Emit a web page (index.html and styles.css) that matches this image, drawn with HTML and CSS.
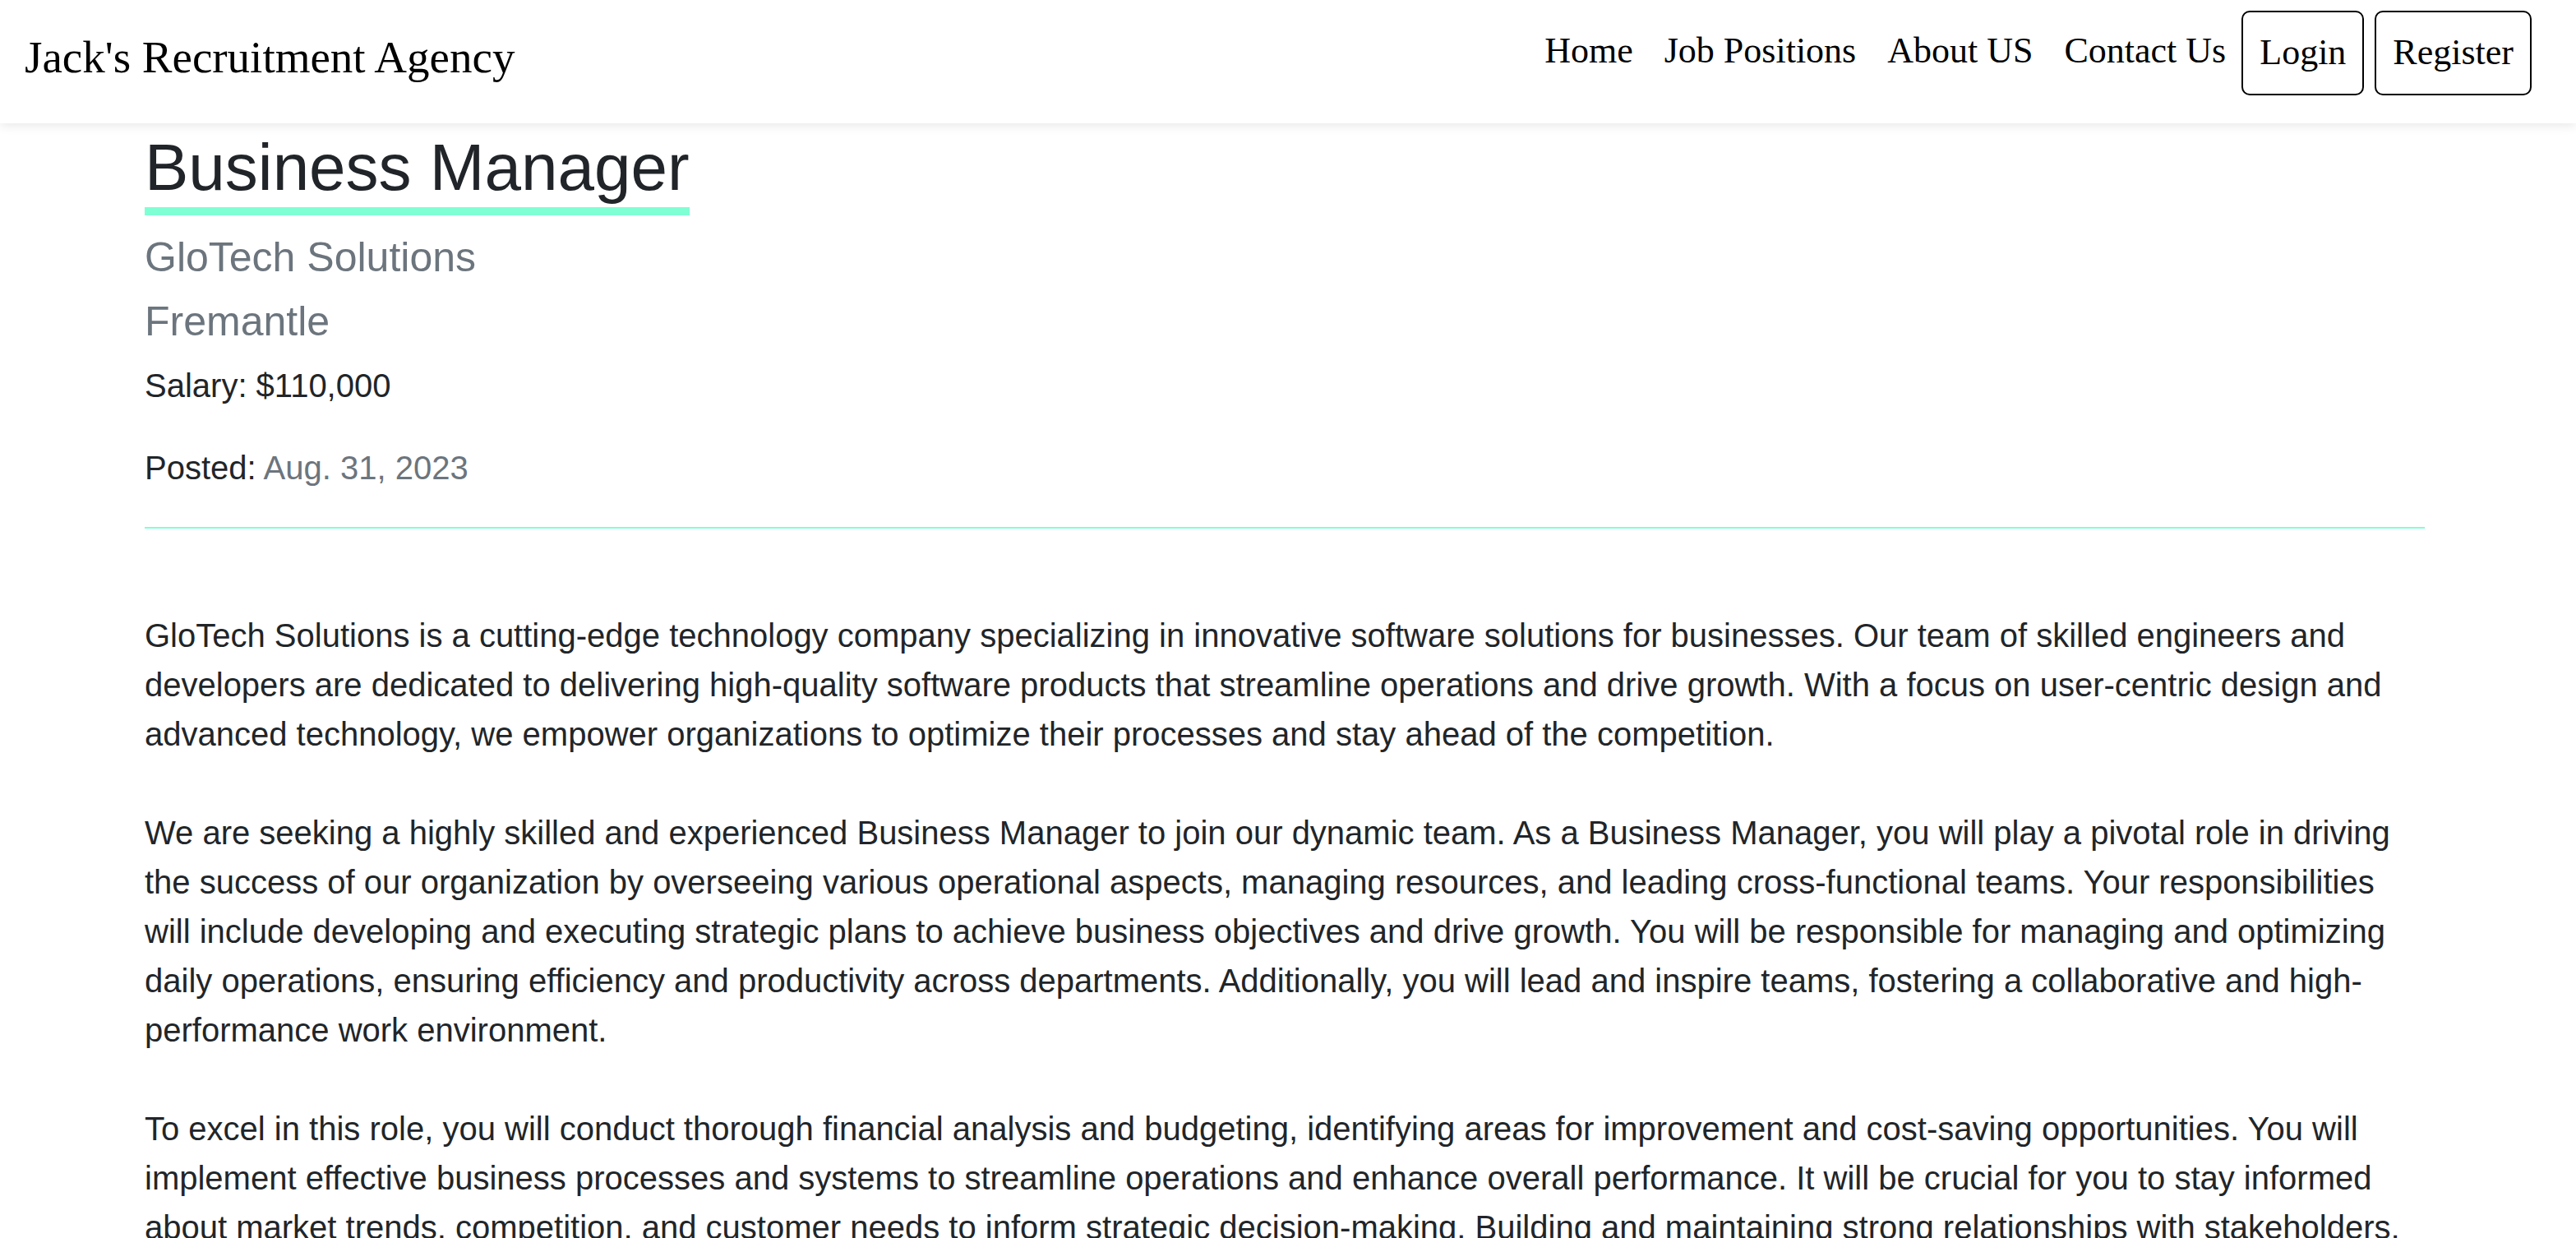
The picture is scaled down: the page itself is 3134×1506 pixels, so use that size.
FILE: index.html
```html
<!DOCTYPE html>
<html lang="en">
<head>
<meta charset="utf-8">
<title>Business Manager - Jack's Recruitment Agency</title>
<link rel="stylesheet" href="styles.css">
</head>
<body>
<header class="navbar">
  <a class="brand" href="#">Jack's Recruitment Agency</a>
  <nav class="nav">
    <a class="nav-link" href="#">Home</a>
    <a class="nav-link" href="#">Job Positions</a>
    <a class="nav-link" href="#">About US</a>
    <a class="nav-link" href="#">Contact Us</a>
    <a class="nav-btn" href="#">Login</a>
    <a class="nav-btn" href="#">Register</a>
  </nav>
</header>
<main class="job">
  <h1 class="job-title">Business Manager</h1>
  <h3 class="job-sub">GloTech Solutions</h3>
  <h3 class="job-sub">Fremantle</h3>
  <p class="job-meta">Salary: $110,000</p>
  <p class="job-meta">Posted: <span class="muted">Aug. 31, 2023</span></p>
  <hr class="divider">
  <div class="job-desc">
    <p>GloTech Solutions is a cutting-edge technology company specializing in innovative software solutions for businesses. Our team of skilled engineers and developers are dedicated to delivering high-quality software products that streamline operations and drive growth. With a focus on user-centric design and advanced technology, we empower organizations to optimize their processes and stay ahead of the competition.</p>
    <p>We are seeking a highly skilled and experienced Business Manager to join our dynamic team. As a Business Manager, you will play a pivotal role in driving the success of our organization by overseeing various operational aspects, managing resources, and leading cross-functional teams. Your responsibilities will include developing and executing strategic plans to achieve business objectives and drive growth. You will be responsible for managing and optimizing daily operations, ensuring efficiency and productivity across departments. Additionally, you will lead and inspire teams, fostering a collaborative and high-performance work environment.</p>
    <p>To excel in this role, you will conduct thorough financial analysis and budgeting, identifying areas for improvement and cost-saving opportunities. You will implement effective business processes and systems to streamline operations and enhance overall performance. It will be crucial for you to stay informed about market trends, competition, and customer needs to inform strategic decision-making. Building and maintaining strong relationships with stakeholders, including clients, partners, and vendors, will also be a key aspect of your role.</p>
  </div>
</main>
</body>
</html>
```

FILE: styles.css
```css
* {
  box-sizing: border-box;
}

html, body {
  margin: 0;
  padding: 0;
  background: #ffffff;
}

body {
  font-family: "Liberation Sans", Arial, sans-serif;
  color: #212529;
}

a {
  text-decoration: none;
  color: #000000;
}

/* ---------- Navbar ---------- */
.navbar {
  display: flex;
  justify-content: space-between;
  align-items: flex-start;
  height: 150px;
  padding: 0 54px 0 30px;
  background: #ffffff;
  box-shadow: 0 3px 12px rgba(0, 0, 0, 0.09);
  font-family: "Liberation Serif", "Times New Roman", serif;
  position: relative;
  z-index: 1;
}

.brand {
  font-size: 55px;
  line-height: 1;
  margin-top: 42px;
  white-space: nowrap;
}

.nav {
  display: flex;
  align-items: flex-start;
}

.nav-link {
  font-size: 44px;
  line-height: 1;
  margin-top: 40px;
  padding: 0 19px;
  white-space: nowrap;
}

.nav-link:last-of-type {
  padding-right: 17px;
}

.nav-btn {
  font-size: 44px;
  line-height: 1;
  margin-top: 13px;
  padding: 27px 20px 28px;
  border: 2px solid #000000;
  border-radius: 10px;
  white-space: nowrap;
}

.nav-btn + .nav-btn {
  margin-left: 13px;
}

/* ---------- Job detail ---------- */
.job {
  padding: 6px 184px 40px 176px;
}

.job-title {
  width: fit-content;
  margin: 0 0 21px;
  font-size: 80px;
  font-weight: 400;
  line-height: 96px;
  color: #212529;
  border-bottom: 10px solid #7fffd4;
}

.job-sub {
  margin: 0 0 18px;
  font-size: 50px;
  font-weight: 400;
  line-height: 60px;
  color: #6c757d;
}

.job-meta {
  margin: 0 0 40px;
  font-size: 40px;
  line-height: 60px;
  color: #212529;
}

.muted {
  color: #6c757d;
}

.divider {
  margin: 42px 0 100px;
  height: 2px;
  border: 0;
  background: #7fffd4;
}

.job-desc p {
  margin: 0 0 60px;
  font-size: 40px;
  line-height: 60px;
  color: #212529;
}
```
